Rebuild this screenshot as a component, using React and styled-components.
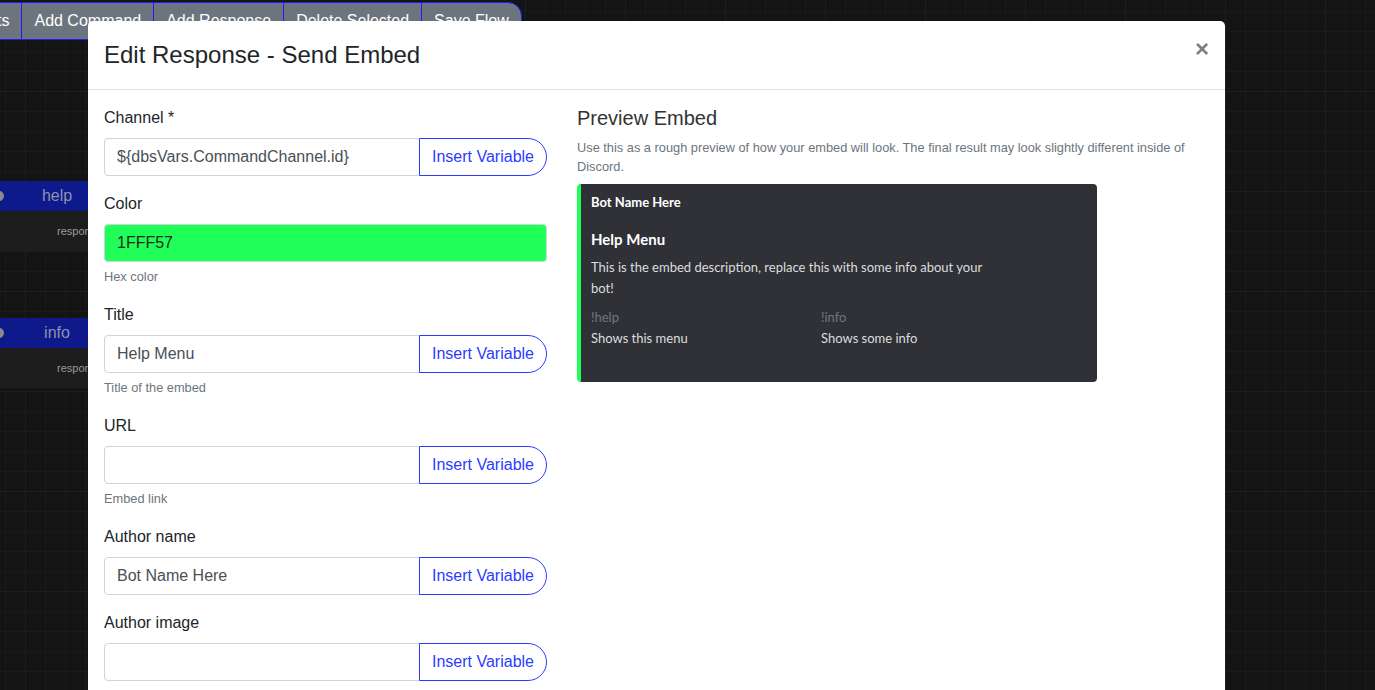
import React from 'react';
import styled, { createGlobalStyle } from 'styled-components';

const GlobalStyle = createGlobalStyle`
  html, body {
    margin: 0;
    padding: 0;
    height: 690px;
    overflow: hidden;
  }
  body {
    font-family: "Liberation Sans", Arial, sans-serif;
    color: #212529;
  }
  * { box-sizing: border-box; }
`;

const Canvas = styled.div`
  position: relative;
  width: 1375px;
  height: 690px;
  overflow: hidden;
  background-color: #141414;
  background-image:
    linear-gradient(to right, #1e1e1e 1px, transparent 1px),
    linear-gradient(to bottom, #1e1e1e 1px, transparent 1px),
    linear-gradient(to right, #1a1a1a 1px, transparent 1px),
    linear-gradient(to bottom, #1a1a1a 1px, transparent 1px);
  background-size: 100px 100px, 100px 100px, 20px 20px, 20px 20px;
  background-position: 25px 0, 0 91px, 5px 0, 0 11px;
`;

const Toolbar = styled.div`
  position: absolute;
  top: 2px;
  left: -3px;
  display: flex;
  z-index: 2;
`;

const ToolButton = styled.button`
  font-family: "Liberation Sans", Arial, sans-serif;
  font-size: 16px;
  line-height: 24px;
  color: #fff;
  background: #6c757d;
  border: 1px solid #1c1cff;
  border-left-width: ${p => (p.$first ? '0' : '1px')};
  padding: 6px 12px 6px ${p => (p.$first ? '0' : '12px')};
  margin-left: ${p => (p.$first ? '0' : '-1px')};
  border-radius: ${p => (p.$last ? '0 14px 0 0' : '0')};
  height: 38px;
  white-space: nowrap;
`;

const Node = styled.div`
  position: absolute;
  left: -40px;
  width: 194px;
`;

const NodeHead = styled.div`
  position: relative;
  height: 30px;
  background: #0e1a8c;
  color: #8d92ad;
  font-size: 16px;
  line-height: 30px;
  text-align: center;
`;

const Pin = styled.span`
  position: absolute;
  left: 34px;
  top: 10px;
  width: 10px;
  height: 10px;
  border-radius: 50%;
  background: #8a8a8a;
`;

const NodeBody = styled.div`
  height: 40px;
  background: #1d1d1d;
  color: #9a9a9a;
  font-size: 11px;
  line-height: 40px;
  padding-left: 97px;
`;

const Modal = styled.div`
  position: absolute;
  top: 21px;
  left: 88px;
  width: 1137px;
  height: 700px;
  background: #fff;
  border-radius: 5px 5px 0 0;
  z-index: 3;
`;

const Header = styled.div`
  display: flex;
  align-items: flex-start;
  padding: 16px;
  border-bottom: 1px solid #dee2e6;
`;

const Title = styled.h4`
  margin: 0;
  font-size: 24px;
  font-weight: 400;
  line-height: 36px;
  color: #212529;
`;

const Close = styled.button`
  margin-left: auto;
  padding: 0;
  border: 0;
  background: transparent;
  font-family: "Liberation Sans", Arial, sans-serif;
  font-size: 24px;
  font-weight: 700;
  line-height: 24px;
  color: #000;
  opacity: 0.5;
`;

const Body = styled.div`
  display: grid;
  grid-template-columns: 443px 632px;
  column-gap: 30px;
  padding: 16px;
`;

const Column = styled.div`
  display: flex;
  flex-direction: column;
`;

const Group = styled.div`
  margin-bottom: 16px;
`;

const Label = styled.label`
  display: block;
  font-size: 16px;
  line-height: 24px;
  margin-bottom: 8px;
  color: #212529;
`;

const InputRow = styled.div`
  display: flex;
  height: 38px;
`;

const Input = styled.input`
  flex: 1;
  min-width: 0;
  height: 38px;
  padding: 6px 12px;
  font-family: "Liberation Sans", Arial, sans-serif;
  font-size: 16px;
  color: ${p => p.$text || '#495057'};
  background: ${p => p.$bg || '#fff'};
  border: 1px solid #ced4da;
  border-radius: ${p => (p.$full ? '4px' : '4px 0 0 4px')};
  outline: none;
`;

const VarButton = styled.button`
  width: 128px;
  height: 38px;
  padding: 6px 12px;
  font-family: "Liberation Sans", Arial, sans-serif;
  font-size: 16px;
  color: #2b3cff;
  background: #fff;
  border: 1px solid #2b3cff;
  border-radius: 0 19px 19px 0;
  margin-left: -1px;
  white-space: nowrap;
`;

const Help = styled.small`
  display: block;
  margin-top: 5px;
  font-size: 12.8px;
  line-height: 19.2px;
  color: #6c757d;
`;

const FieldHelp = styled(Help)`
  line-height: 20px;
  margin-top: 5px;
`;

const PreviewTitle = styled.h5`
  margin: 0 0 8px;
  font-size: 20px;
  font-weight: 400;
  line-height: 24px;
  color: #333;
`;

const Embed = styled.div`
  width: 520px;
  margin-top: 8px;
  background: #2f3136;
  border-left: 4px solid #1fff57;
  border-radius: 4px;
  padding: 8px 16px 33px 10px;
  font-family: Lato, "Noto Sans", sans-serif;
`;

const Author = styled.div`
  font-size: 13px;
  font-weight: 700;
  line-height: 20px;
  color: #fff;
`;

const EmbedTitle = styled.div`
  margin-top: 17px;
  font-size: 15px;
  font-weight: 700;
  line-height: 20px;
  color: #fff;
`;

const Description = styled.div`
  margin-top: 8px;
  max-width: 404px;
  font-size: 13px;
  line-height: 21px;
  color: #dcddde;
`;

const Fields = styled.div`
  display: grid;
  grid-template-columns: 230px 230px;
  margin-top: 8px;
`;

const FieldName = styled.div`
  font-size: 13px;
  line-height: 20px;
  color: #72767d;
`;

const FieldValue = styled.div`
  font-size: 13px;
  line-height: 22px;
  color: #dcddde;
`;

const fields = [
  { name: 'Channel *', value: '${dbsVars.CommandChannel.id}', variable: true },
  { name: 'Color', value: '1FFF57', bg: '#1fff57', text: '#1d2a20', help: 'Hex color' },
  { name: 'Title', value: 'Help Menu', variable: true, help: 'Title of the embed' },
  { name: 'URL', value: '', variable: true, help: 'Embed link' },
  { name: 'Author name', value: 'Bot Name Here', variable: true },
  { name: 'Author image', value: '', variable: true },
];

export default function App() {
  return (
    <>
      <GlobalStyle />
      <Canvas>
        <Toolbar>
          <ToolButton $first>ts</ToolButton>
          <ToolButton>Add Command</ToolButton>
          <ToolButton>Add Response</ToolButton>
          <ToolButton>Delete Selected</ToolButton>
          <ToolButton $last>Save Flow</ToolButton>
        </Toolbar>

        <Node style={{ top: 181 }}>
          <NodeHead><Pin />help</NodeHead>
          <NodeBody>response</NodeBody>
        </Node>
        <Node style={{ top: 318 }}>
          <NodeHead><Pin />info</NodeHead>
          <NodeBody>response</NodeBody>
        </Node>

        <Modal>
          <Header>
            <Title>Edit Response - Send Embed</Title>
            <Close>×</Close>
          </Header>
          <Body>
            <Column>
              {fields.map(f => (
                <Group key={f.name}>
                  <Label>{f.name}</Label>
                  <InputRow>
                    <Input
                      readOnly
                      value={f.value}
                      $bg={f.bg}
                      $text={f.text}
                      $full={!f.variable}
                    />
                    {f.variable && <VarButton>Insert Variable</VarButton>}
                  </InputRow>
                  {f.help && <FieldHelp>{f.help}</FieldHelp>}
                </Group>
              ))}
            </Column>
            <Column>
              <PreviewTitle>Preview Embed</PreviewTitle>
              <Help as="p" style={{ margin: 0 }}>
                Use this as a rough preview of how your embed will look. The final result may look slightly different inside of Discord.
              </Help>
              <Embed>
                <Author>Bot Name Here</Author>
                <EmbedTitle>Help Menu</EmbedTitle>
                <Description>
                  This is the embed description, replace this with some info about your bot!
                </Description>
                <Fields>
                  <div>
                    <FieldName>!help</FieldName>
                    <FieldValue>Shows this menu</FieldValue>
                  </div>
                  <div>
                    <FieldName>!info</FieldName>
                    <FieldValue>Shows some info</FieldValue>
                  </div>
                </Fields>
              </Embed>
            </Column>
          </Body>
        </Modal>
      </Canvas>
    </>
  );
}
